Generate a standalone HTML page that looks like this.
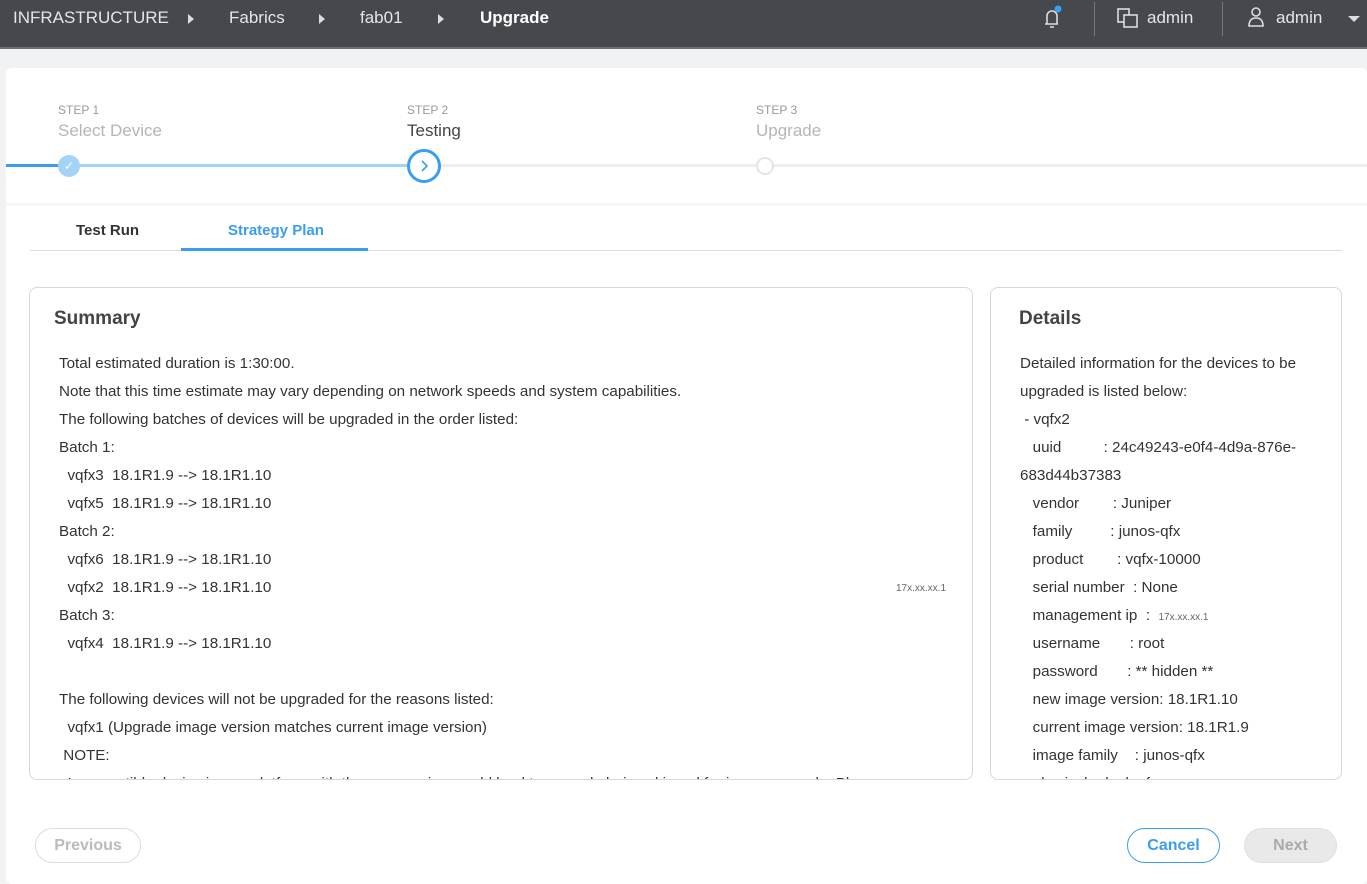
<!DOCTYPE html>
<html><head><style>
*{box-sizing:border-box;margin:0;padding:0}
body{width:1367px;height:884px;overflow:hidden;background:#f1f2f3;font-family:"Liberation Sans",sans-serif;position:relative;color:#333}
.hdr{position:absolute;left:0;top:0;width:1367px;height:49px;background:#45484c;border-bottom:2px solid #6b6e72;color:#e6e6e6;font-size:17px}
.hdr span{position:absolute;top:8px}
.tri{width:0;height:0;border-left:6px solid #ddd;border-top:5px solid transparent;border-bottom:5px solid transparent;position:absolute;top:14px}
.card{position:absolute;left:6px;top:68px;width:1361px;height:816px;background:#fff;border-radius:6px}
.abs{position:absolute}
.step{font-size:12px;color:#9a9a9a}
.sname{font-size:17px;color:#b5b5b5}
.box{position:absolute;border:1px solid #d8d8d8;border-radius:8px;overflow:hidden;background:#fff}
.box h3{position:absolute;left:24px;top:20px;font-size:19px;font-weight:bold;color:#444}
.lines{position:absolute;font-size:15.2px;color:#333;line-height:28px;white-space:pre}
.sm{font-size:10px;color:#666;line-height:10px}
.btn{position:absolute;height:35px;border-radius:18px;font-size:16px;font-weight:bold;text-align:center;line-height:33px}
</style></head><body>
<div class="hdr">
<span style="left:13px">INFRASTRUCTURE</span><div class="tri" style="left:188px"></div>
<span style="left:229px">Fabrics</span><div class="tri" style="left:319px"></div>
<span style="left:360px">fab01</span><div class="tri" style="left:438px"></div>
<span style="left:480px;color:#fff;font-weight:bold">Upgrade</span>
<svg class="abs" style="left:1040px;top:5px" width="24" height="26" viewBox="0 0 24 26"><path d="M5 19h13M7 19V11a5 5 0 0110 0v8M10 22h4" fill="none" stroke="#ddd" stroke-width="1.6"/><circle cx="18" cy="4" r="3.5" fill="#3aa0f5"/></svg>
<div class="abs" style="left:1094px;top:2px;width:1px;height:34px;background:#777"></div>
<svg class="abs" style="left:1117px;top:8px" width="24" height="22"><rect x="1" y="1" width="11" height="13" fill="none" stroke="#ddd" stroke-width="1.6"/><rect x="7" y="7" width="13" height="12" fill="#45484c" stroke="#ddd" stroke-width="1.6"/></svg>
<span style="left:1147px">admin</span>
<div class="abs" style="left:1222px;top:2px;width:1px;height:34px;background:#777"></div>
<svg class="abs" style="left:1245px;top:6px" width="22" height="24"><circle cx="11" cy="6" r="4" fill="none" stroke="#ddd" stroke-width="1.6"/><path d="M4 20q0-8 7-8t7 8z" fill="none" stroke="#ddd" stroke-width="1.6"/></svg>
<span style="left:1276px">admin</span>
<div class="abs" style="left:1348px;top:16px;border-top:6px solid #ddd;border-left:6px solid transparent;border-right:6px solid transparent"></div>
</div>
<div class="card">
<div class="abs step" style="left:52px;top:35px">STEP 1</div>
<div class="abs sname" style="left:52px;top:53px">Select Device</div>
<div class="abs step" style="left:401px;top:35px">STEP 2</div>
<div class="abs sname" style="left:401px;top:53px;color:#444">Testing</div>
<div class="abs step" style="left:750px;top:35px">STEP 3</div>
<div class="abs sname" style="left:750px;top:53px">Upgrade</div>
<div class="abs" style="left:0;top:96px;width:1361px;height:3px;background:#eee"></div>
<div class="abs" style="left:0;top:96px;width:418px;height:3px;background:#a5d3f7"></div>
<div class="abs" style="left:0;top:96px;width:55px;height:3px;background:#3a9df0"></div>
<div class="abs" style="left:52px;top:87px;width:22px;height:22px;border-radius:50%;background:#a5d3f7;color:#fff;font-size:12px;text-align:center;line-height:22px">✓</div>
<div class="abs" style="left:401px;top:81px;width:34px;height:34px;border-radius:50%;background:#fff;border:3px solid #3a9df0"><svg width="28" height="28"><path d="M12 9l5 5-5 5" fill="none" stroke="#3a9df0" stroke-width="1.6"/></svg></div>
<div class="abs" style="left:750px;top:89px;width:18px;height:18px;border-radius:50%;background:#fff;border:2px solid #e4e4e4"></div>
<div class="abs" style="left:0;top:135px;width:1361px;height:3px;background:#f7f7f7"></div>
<div class="abs" style="left:70px;top:154px;font-size:15px;font-weight:bold;color:#333">Test Run</div>
<div class="abs" style="left:222px;top:154px;font-size:15px;font-weight:bold;color:#3a9df0">Strategy Plan</div>
<div class="abs" style="left:24px;top:182px;width:1312px;height:1px;background:#ddd"></div>
<div class="abs" style="left:175px;top:180px;width:187px;height:3px;background:#3a9df0"></div>
<div class="box" style="left:23px;top:219px;width:944px;height:493px"><h3>Summary</h3>
<div class="lines" style="left:29px;top:62px">Total estimated duration is 1:30:00.
Note that this time estimate may vary depending on network speeds and system capabilities.
The following batches of devices will be upgraded in the order listed:
Batch 1:
  vqfx3  18.1R1.9 --> 18.1R1.10
  vqfx5  18.1R1.9 --> 18.1R1.10
Batch 2:
  vqfx6  18.1R1.9 --> 18.1R1.10
  vqfx2  18.1R1.9 --> 18.1R1.10
Batch 3:
  vqfx4  18.1R1.9 --> 18.1R1.10

The following devices will not be upgraded for the reasons listed:
  vqfx1 (Upgrade image version matches current image version)
 NOTE:
  Incompatible device image platform with the new version would lead to upgrade being skipped for image upgrade. Please</div>
<div class="abs" style="left:866px;top:295px;font-size:10px;color:#666">17x.xx.xx.1</div>
</div>
<div class="box" style="left:984px;top:219px;width:352px;height:493px"><h3 style="left:28px">Details</h3>
<div class="lines" style="left:29px;top:62px">Detailed information for the devices to be
upgraded is listed below:
 - vqfx2
   uuid          : 24c49243-e0f4-4d9a-876e-
683d44b37383
   vendor        : Juniper
   family         : junos-qfx
   product        : vqfx-10000
   serial number  : None
   management ip  :  <span class="sm">17x.xx.xx.1</span>
   username       : root
   password       : ** hidden **
   new image version: 18.1R1.10
   current image version: 18.1R1.9
   image family    : junos-qfx
   physical role: leaf</div>
</div>
<div class="btn" style="left:29px;top:760px;width:106px;border:1px solid #ddd;color:#bbb">Previous</div>
<div class="btn" style="left:1121px;top:760px;width:93px;border:1px solid #3a9df0;color:#3a9df0">Cancel</div>
<div class="btn" style="left:1238px;top:760px;width:93px;background:#e9e9e9;border:1px solid #e0e0e0;color:#aaa">Next</div>
</div>
</body></html>
